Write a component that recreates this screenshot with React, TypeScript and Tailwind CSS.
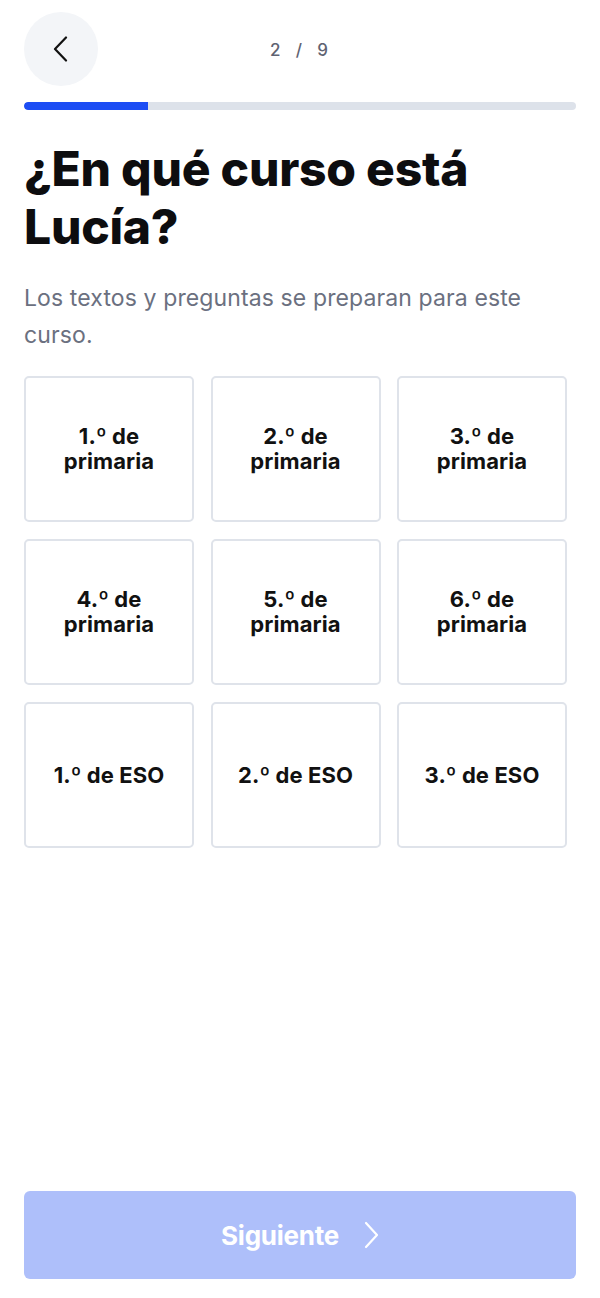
import React from "react";

const grades = [
  ["1.º de", "primaria"],
  ["2.º de", "primaria"],
  ["3.º de", "primaria"],
  ["4.º de", "primaria"],
  ["5.º de", "primaria"],
  ["6.º de", "primaria"],
  ["1.º de ESO"],
  ["2.º de ESO"],
  ["3.º de ESO"],
];

export default function App() {
  return (
    <div
      className="min-h-[1298px] w-full bg-white flex flex-col px-6"
      style={{ fontFamily: "Inter, 'Liberation Sans', sans-serif" }}
    >
      <div className="grid grid-cols-[74px_1fr_74px] items-center mt-3">
        <button className="w-[74px] h-[74px] rounded-full bg-[#f3f5f8] flex items-center justify-center">
          <svg width="16" height="26" viewBox="0 0 16 26" fill="none">
            <path d="M13 1.5L2 13l11 11.5" stroke="#111" strokeWidth="2.2" strokeLinecap="round" strokeLinejoin="round" />
          </svg>
        </button>
        <div className="pt-1 text-center text-[17px] font-medium text-[#5f6372] tracking-[0.12em]">
          2&nbsp;&nbsp;/&nbsp;&nbsp;9
        </div>
        <div />
      </div>

      <div className="mt-[16px] h-2 w-full rounded-full bg-[#dde2ea] overflow-hidden">
        <div className="h-full w-[22.4%] bg-[#1c4df4] rounded-l-full" />
      </div>

      <h1 className="mt-[30px] text-[48px] leading-[58px] font-extrabold tracking-[-0.005em] text-[#0d0d0f]">
        ¿En qué curso está
        <br />
        Lucía?
      </h1>

      <p className="mt-[24px] text-[23px] leading-[37px] text-[#6b7080] tracking-[0.005em]">
        Los textos y preguntas se preparan para este curso.
      </p>

      <div className="mt-[22px] grid grid-cols-3 gap-x-[16.5px] gap-y-[17px] w-[543px]">
        {grades.map((g, i) => (
          <div
            key={i}
            className="h-[146px] rounded-[5px] border-2 border-[#dfe3ea] flex flex-col items-center justify-center text-center text-[22px] leading-[25px] font-bold tracking-[0.005em] text-[#111]"
          >
            {g.map((line, j) => (
              <span key={j}>{line}</span>
            ))}
          </div>
        ))}
      </div>

      <div className="flex-1" />

      <button className="mb-[19px] h-[88px] w-full rounded-md bg-[#aebffa] flex items-center justify-center gap-6 text-white text-[26px] font-bold tracking-[-0.01em]">
        <span>Siguiente</span>
        <svg width="16" height="28" viewBox="0 0 16 28" fill="none">
          <path d="M3 2l11 12L3 26" stroke="#fff" strokeWidth="2.2" strokeLinecap="round" strokeLinejoin="round" />
        </svg>
      </button>
    </div>
  );
}
